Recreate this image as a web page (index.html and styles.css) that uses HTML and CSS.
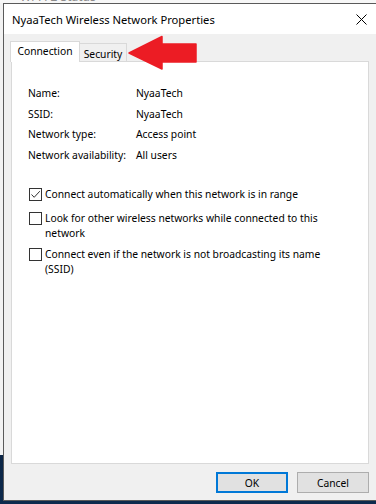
FILE: index.html
```html
<!DOCTYPE html>
<html>
<head>
<meta charset="utf-8">
<link rel="stylesheet" href="styles.css">
</head>
<body>
<div class="bgwin"><span class="bgtitle">Wi-Fi 2 Status</span></div>
<div class="main">
  <div class="window">
    <div class="titlebar">
      <span class="title">NyaaTech Wireless Network Properties</span>
      <svg class="close" width="11" height="11" viewBox="0 0 11 11"><path d="M0.5 0.5 L10.5 10.5 M10.5 0.5 L0.5 10.5" stroke="#000" stroke-width="1" fill="none"/></svg>
    </div>
    <div class="client">
      <div class="tabs">
        <div class="tab active">Connection</div>
        <div class="tab">Security</div>
      </div>
      <svg class="arrow" width="76" height="40" viewBox="0 0 76 40"><polygon points="3,19 36,2.5 36,10 70,10 70,28 36,28 36,35" fill="#ec1c24" stroke="#ec1c24" stroke-width="1.5" stroke-linejoin="round"/></svg>
      <div class="panel">
        <div class="info">
          <span>Name:</span><span>NyaaTech</span>
          <span>SSID:</span><span>NyaaTech</span>
          <span>Network type:</span><span>Access point</span>
          <span>Network availability:</span><span>All users</span>
        </div>
        <div class="checks">
          <div class="check c1">
            <span class="box"><svg width="11" height="11" viewBox="0 0 11 11"><polyline points="1.5,5.5 4.2,8.3 9.8,2.2" fill="none" stroke="#333" stroke-width="1"/></svg></span>
            <span class="label">Connect automatically when this network is in range</span>
          </div>
          <div class="check c2">
            <span class="box"></span>
            <span class="label">Look for other wireless networks while connected to this network</span>
          </div>
          <div class="check c3">
            <span class="box"></span>
            <span class="label">Connect even if the network is not broadcasting its name (SSID)</span>
          </div>
        </div>
      </div>
      <div class="buttons">
        <button class="btn default">OK</button>
        <button class="btn">Cancel</button>
      </div>
    </div>
  </div>
</div>
</body>
</html>
```
FILE: styles.css
```css
html, body {
  margin: 0;
  padding: 0;
}
body {
  width: 376px;
  height: 504px;
  overflow: hidden;
  display: flex;
  flex-direction: column;
  background: linear-gradient(#f2f2f2 0, #f2f2f2 455px, #0b2545 455px, #0d2a4d 504px);
  font-family: "Noto Sans", "DejaVu Sans", sans-serif;
  color: #000;
}
.bgwin {
  height: 3px;
  overflow: hidden;
  display: flex;
  align-items: flex-end;
  padding-left: 20px;
  background: #f7f7f7;
}
.bgtitle {
  font-size: 12px;
  line-height: 12px;
  color: #8c8c8c;
}
.main {
  flex: 1;
  display: flex;
  padding: 0 0 3px 3px;
}
.window {
  flex: 1;
  display: flex;
  flex-direction: column;
  border: 1px solid #5a5a5a;
  border-right: 0;
  background: #f0f0f0;
}
.titlebar {
  height: 30px;
  background: #fff;
  display: flex;
  align-items: center;
  justify-content: space-between;
  padding: 0 9px 0 8px;
}
.title {
  font-size: 11.2px;
  white-space: nowrap;
}
.close {
  display: block;
}
.client {
  position: relative;
  flex: 1;
  padding: 7px 7px 0 6px;
  display: flex;
  flex-direction: column;
}
.tabs {
  display: flex;
  align-items: flex-end;
  height: 20px;
  font-size: 10.3px;
}
.tab {
  box-sizing: border-box;
  border: 1px solid #d9d9d9;
  border-bottom: 0;
  text-align: center;
  background: #f0f0f0;
  width: 48px;
  height: 18px;
  line-height: 18px;
  margin-left: -1px;
  padding-top: 1px;
}
.tab.active {
  position: relative;
  z-index: 2;
  width: 70px;
  height: 21px;
  line-height: 19px;
  padding-top: 0;
  margin-left: 0;
  margin-bottom: -1px;
  background: #fff;
}
.arrow {
  position: absolute;
  left: 122px;
  top: 0;
}
.panel {
  box-sizing: border-box;
  width: 358px;
  height: 403px;
  margin-left: 1px;
  border: 1px solid #d9d9d9;
  background: #fff;
  padding: 21px 0 0 16px;
  font-size: 10.3px;
}
.info {
  display: grid;
  grid-template-columns: 108px auto;
  line-height: 20.6px;
}
.checks {
  display: flex;
  flex-direction: column;
  margin-top: 22px;
}
.check {
  display: flex;
  align-items: flex-start;
  gap: 3px;
  line-height: 15px;
}
.c2 {
  margin-top: 9px;
}
.c3 {
  margin-top: 6px;
}
.box {
  box-sizing: border-box;
  flex: none;
  width: 13px;
  height: 13px;
  margin: 1px 0 0 1px;
  border: 1px solid #333;
  background: #fff;
  display: flex;
}
.box svg {
  display: block;
}
.label {
  width: 290px;
}
.buttons {
  display: flex;
  justify-content: flex-end;
  gap: 9px;
  margin-top: 8px;
}
.btn {
  box-sizing: border-box;
  width: 72px;
  height: 21px;
  padding: 0;
  border: 1px solid #adadad;
  background: #e1e1e1;
  font-family: "Noto Sans", "DejaVu Sans", sans-serif;
  font-size: 10.3px;
  color: #000;
}
.btn.default {
  border: 2px solid #0078d7;
}
```
